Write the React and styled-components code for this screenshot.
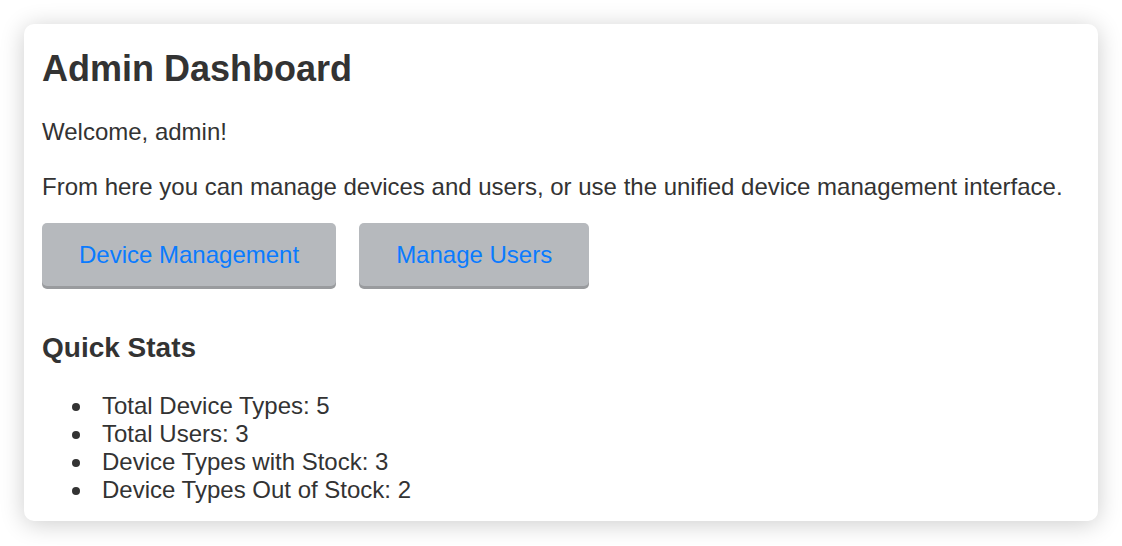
import React from "react";
import styled, { createGlobalStyle } from "styled-components";

const Global = createGlobalStyle`
  html, body { margin: 0; padding: 0; background: #ffffff; }
  body {
    font-family: "Liberation Sans", Arial, Helvetica, sans-serif;
    color: #333333;
  }
`;

const Page = styled.div`
  padding: 24px;
`;

const Card = styled.div`
  background: #ffffff;
  border-radius: 10px;
  box-shadow: 0 3px 24px rgba(0, 0, 0, 0.2);
  padding: 24px 18px 18px;
  height: 497px;
  box-sizing: border-box;
`;

const Title = styled.h1`
  margin: 0;
  font-size: 36px;
  line-height: 41px;
  font-weight: bold;
  color: #333333;
`;

const Text = styled.p`
  margin: ${(p) => p.$top}px 0 0;
  font-size: 24px;
  line-height: 28px;
  color: #333333;
`;

const Actions = styled.div`
  display: flex;
  gap: 23px;
  margin-top: 22px;
`;

const ActionButton = styled.a`
  display: inline-block;
  background: #b6b9bd;
  color: #0a7bff;
  font-size: 24px;
  line-height: 28px;
  padding: 18px 37px 17px;
  border-radius: 5px;
  text-decoration: none;
  box-shadow: 0 3px 0 #999b9e;
  cursor: pointer;
`;

const SubTitle = styled.h3`
  margin: 46px 0 0;
  font-size: 28px;
  line-height: 32px;
  font-weight: bold;
  color: #333333;
`;

const StatList = styled.ul`
  margin: 28px 0 0;
  padding: 0;
  list-style: none;
  font-size: 24px;
  line-height: 28px;
  color: #333333;
`;

const StatItem = styled.li`
  display: flex;
  align-items: center;
`;

const Bullet = styled.span`
  width: 8px;
  height: 8px;
  border-radius: 50%;
  background: #333333;
  margin: 1px 22px 0 30px;
  flex: none;
`;

const stats = [
  "Total Device Types: 5",
  "Total Users: 3",
  "Device Types with Stock: 3",
  "Device Types Out of Stock: 2",
];

export default function App() {
  return (
    <>
      <Global />
      <Page>
        <Card>
          <Title>Admin Dashboard</Title>
          <Text $top={29}>Welcome, admin!</Text>
          <Text $top={27}>
            From here you can manage devices and users, or use the unified device management interface.
          </Text>
          <Actions>
            <ActionButton>Device Management</ActionButton>
            <ActionButton>Manage Users</ActionButton>
          </Actions>
          <SubTitle>Quick Stats</SubTitle>
          <StatList>
            {stats.map((s) => (
              <StatItem key={s}>
                <Bullet />
                {s}
              </StatItem>
            ))}
          </StatList>
        </Card>
      </Page>
    </>
  );
}
